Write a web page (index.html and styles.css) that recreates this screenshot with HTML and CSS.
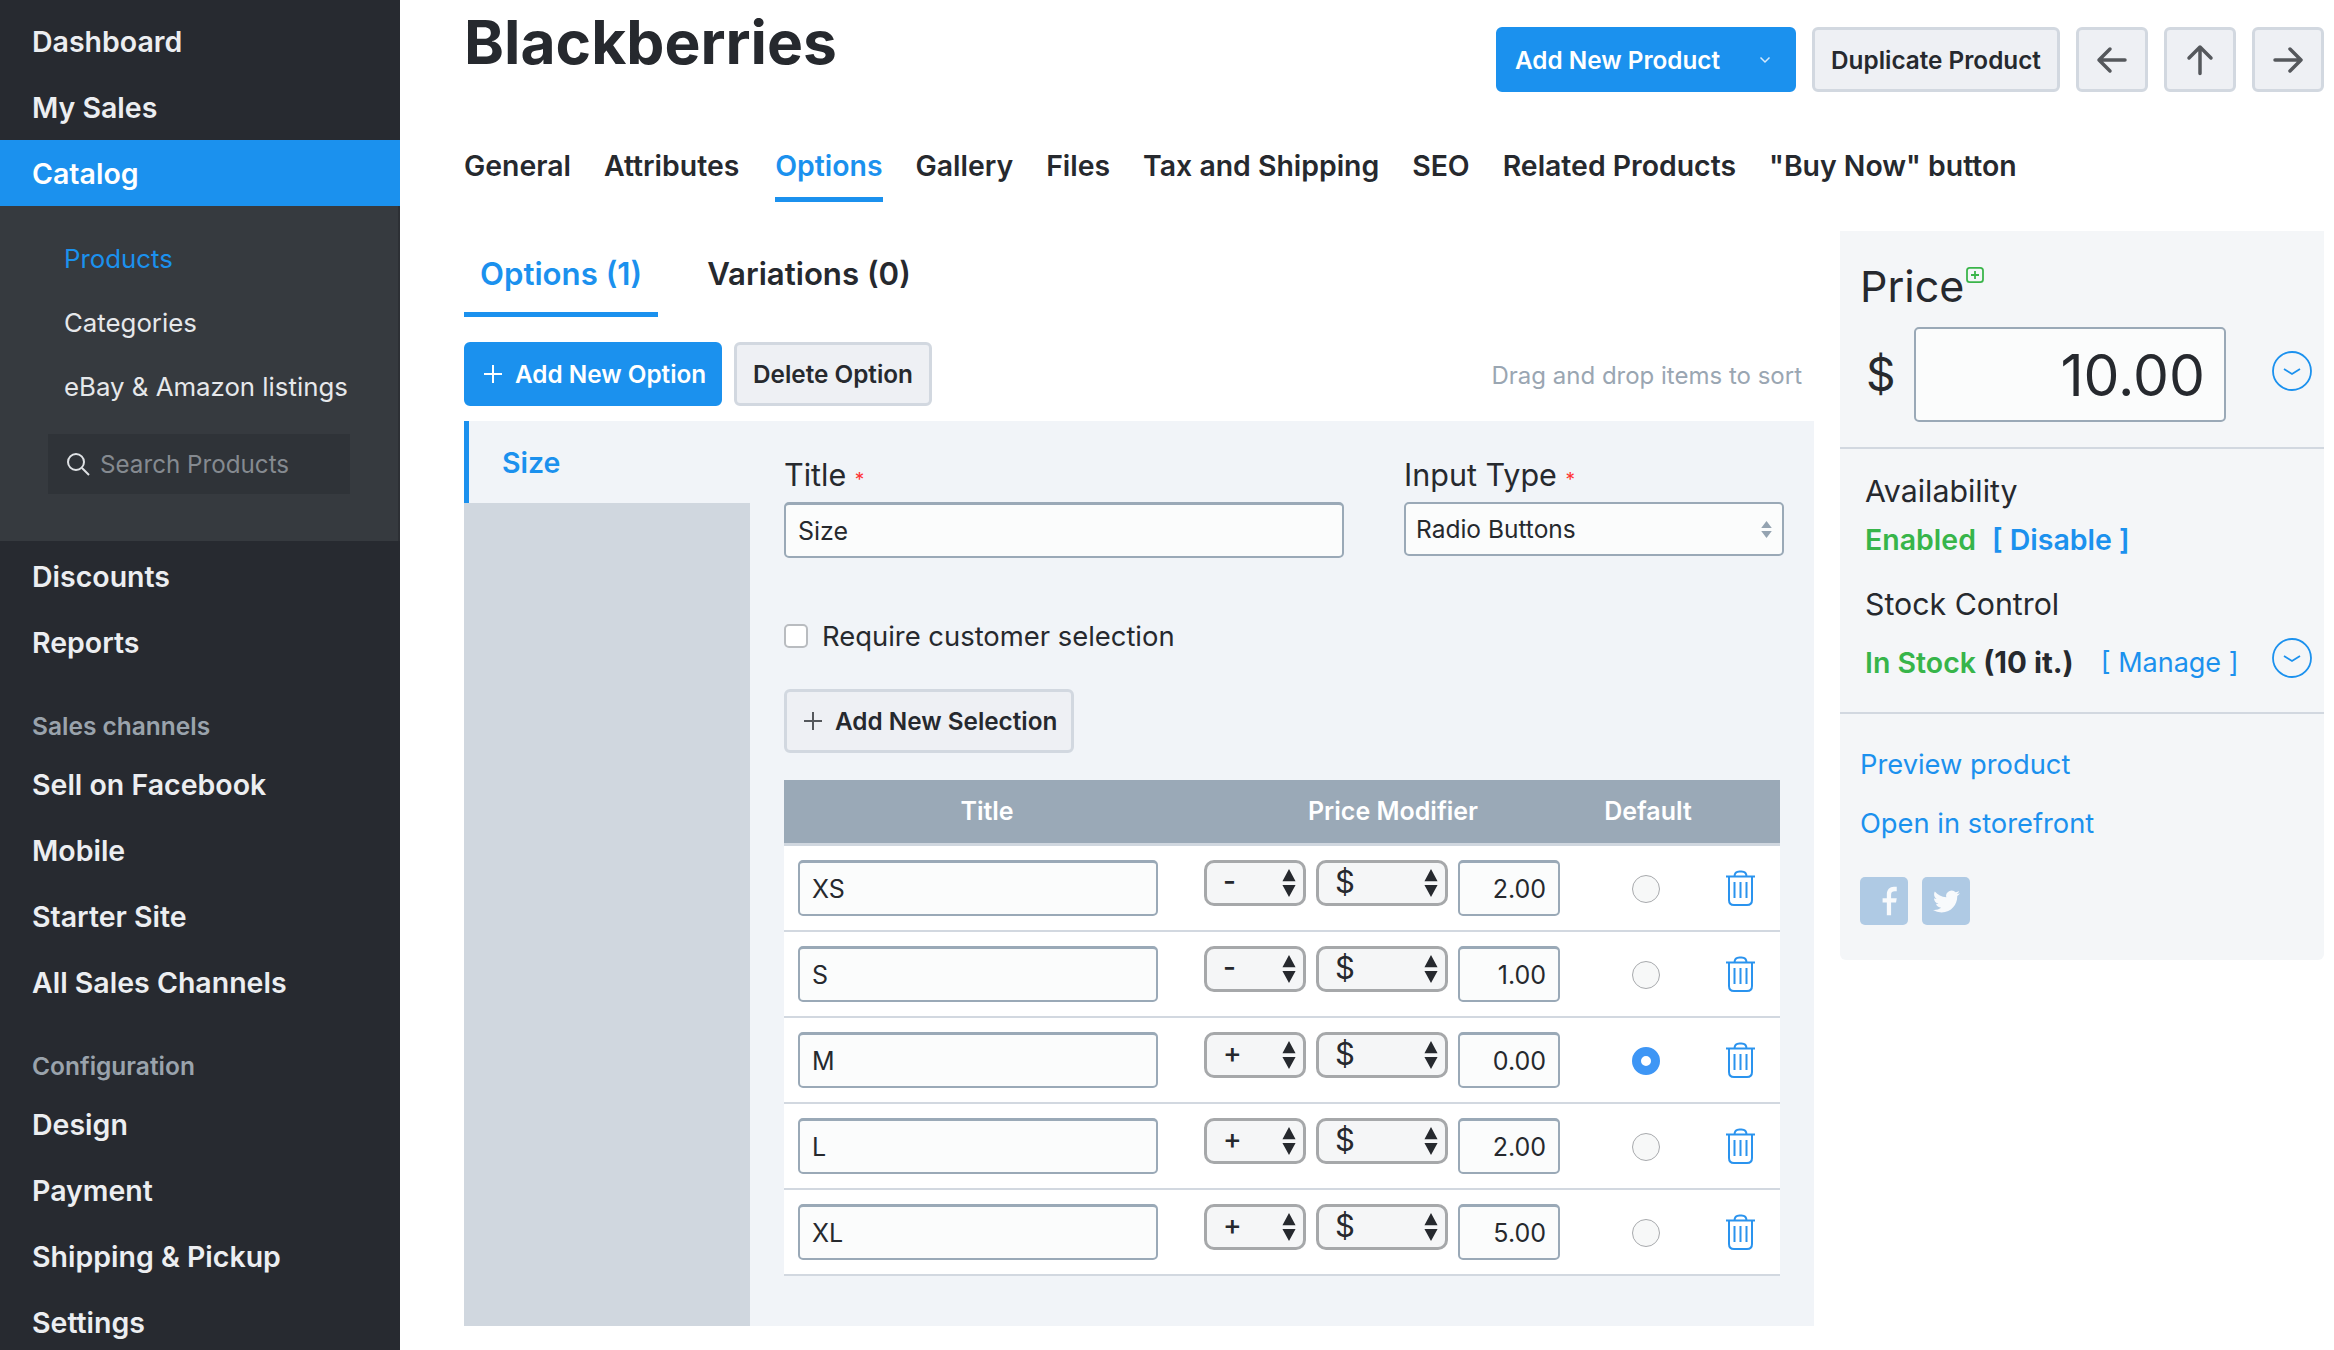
FILE: index.html
```html
<!DOCTYPE html>
<html lang="en">
<head>
<meta charset="utf-8">
<title>Blackberries</title>
<link rel="stylesheet" href="styles.css">
</head>
<body>
<div class="app">
  <nav class="sidebar">
    <a class="nav-item">Dashboard</a>
    <a class="nav-item">My Sales</a>
    <a class="nav-item active">Catalog</a>
    <div class="subnav">
      <a class="sub-item current">Products</a>
      <a class="sub-item">Categories</a>
      <a class="sub-item">eBay &amp; Amazon listings</a>
      <div class="search">
        <svg class="search-icon" viewBox="0 0 24 24"><circle cx="10" cy="10" r="8"/><path d="M16 16l7 7"/></svg>
        <span>Search Products</span>
      </div>
    </div>
    <a class="nav-item">Discounts</a>
    <a class="nav-item">Reports</a>
    <div class="nav-heading">Sales channels</div>
    <a class="nav-item">Sell on Facebook</a>
    <a class="nav-item">Mobile</a>
    <a class="nav-item">Starter Site</a>
    <a class="nav-item">All Sales Channels</a>
    <div class="nav-heading">Configuration</div>
    <a class="nav-item">Design</a>
    <a class="nav-item">Payment</a>
    <a class="nav-item">Shipping &amp; Pickup</a>
    <a class="nav-item">Settings</a>
  </nav>

  <main class="main">
    <header class="page-head">
      <h1 class="page-title">Blackberries</h1>
      <div class="actions">
        <button class="btn btn-primary btn-split">Add New Product
          <svg class="caret" viewBox="0 0 12 8"><path d="M1.5 1.5L6 6l4.5-4.5"/></svg>
        </button>
        <button class="btn btn-dup">Duplicate Product</button>
        <button class="btn btn-icon"><svg viewBox="0 0 32 32"><path d="M29 16H3M14 5L3 16l11 11"/></svg></button>
        <button class="btn btn-icon"><svg viewBox="0 0 32 32"><path d="M16 29.500V3M5 14L16 3l11 11"/></svg></button>
        <button class="btn btn-icon"><svg viewBox="0 0 32 32"><path d="M3 16h26M18 5l11 11-11 11"/></svg></button>
      </div>
    </header>

    <div class="tabs">
      <a class="tab">General</a>
      <a class="tab">Attributes</a>
      <a class="tab active">Options</a>
      <a class="tab">Gallery</a>
      <a class="tab">Files</a>
      <a class="tab">Tax and Shipping</a>
      <a class="tab">SEO</a>
      <a class="tab">Related Products</a>
      <a class="tab">"Buy Now" button</a>
    </div>

    <div class="content">
      <section class="editor">
        <div class="subtabs">
          <a class="subtab active">Options (1)</a>
          <a class="subtab">Variations (0)</a>
        </div>
        <div class="toolbar">
          <button class="btn btn-primary btn-add">
            <svg class="plus" viewBox="0 0 20 20"><path d="M10 1v18M1 10h18"/></svg>Add New Option
          </button>
          <button class="btn btn-delete">Delete Option</button>
          <span class="hint">Drag and drop items to sort</span>
        </div>
        <div class="panel">
          <aside class="option-list">
            <a class="option-item">Size</a>
          </aside>
          <div class="option-form">
            <div class="form-top">
              <div class="form-col-title">
                <label class="label">Title <i class="req">*</i></label>
                <div class="field">Size</div>
              </div>
              <div class="form-col-type">
                <label class="label">Input Type <i class="req">*</i></label>
                <div class="field field-select">Radio Buttons
                  <svg class="updown" viewBox="0 0 12 18"><path d="M6 1l5 6.500H1zM6 17l5-6.500H1z"/></svg>
                </div>
              </div>
            </div>
            <label class="check"><span class="checkbox"></span>Require customer selection</label>
            <button class="btn btn-selection">
              <svg class="plus" viewBox="0 0 20 20"><path d="M10 1v18M1 10h18"/></svg>Add New Selection
            </button>
            <div class="sel-table">
              <div class="sel-head">
                <span>Title</span><span>Price Modifier</span><span>Default</span>
              </div>
              <div class="sel-row">
                <div class="field">XS</div>
                <div class="mods"><div class="mini mini-sign"><span>-</span><svg class="spin" viewBox="0 0 16 32"><path d="M8 1l7 13H1zM8 31l7-13H1z"/></svg></div><div class="mini mini-cur"><span>$</span><svg class="spin" viewBox="0 0 16 32"><path d="M8 1l7 13H1zM8 31l7-13H1z"/></svg></div><div class="field field-num">2.00</div></div>
                <div class="radio-cell"><span class="radio"></span></div>
                <svg class="trash" viewBox="0 0 31 36"><path d="M1 6.500h29M9.500 6.500q0-5 5-5h2q5 0 5 5M4 6.500V30q0 5 5 5h13q5 0 5-5V6.500M9.500 12v16M15.500 12v16M21.500 12v16"/></svg>
              </div>
              <div class="sel-row">
                <div class="field">S</div>
                <div class="mods"><div class="mini mini-sign"><span>-</span><svg class="spin" viewBox="0 0 16 32"><path d="M8 1l7 13H1zM8 31l7-13H1z"/></svg></div><div class="mini mini-cur"><span>$</span><svg class="spin" viewBox="0 0 16 32"><path d="M8 1l7 13H1zM8 31l7-13H1z"/></svg></div><div class="field field-num">1.00</div></div>
                <div class="radio-cell"><span class="radio"></span></div>
                <svg class="trash" viewBox="0 0 31 36"><path d="M1 6.500h29M9.500 6.500q0-5 5-5h2q5 0 5 5M4 6.500V30q0 5 5 5h13q5 0 5-5V6.500M9.500 12v16M15.500 12v16M21.500 12v16"/></svg>
              </div>
              <div class="sel-row">
                <div class="field">M</div>
                <div class="mods"><div class="mini mini-sign"><span>+</span><svg class="spin" viewBox="0 0 16 32"><path d="M8 1l7 13H1zM8 31l7-13H1z"/></svg></div><div class="mini mini-cur"><span>$</span><svg class="spin" viewBox="0 0 16 32"><path d="M8 1l7 13H1zM8 31l7-13H1z"/></svg></div><div class="field field-num">0.00</div></div>
                <div class="radio-cell"><span class="radio radio-on"></span></div>
                <svg class="trash" viewBox="0 0 31 36"><path d="M1 6.500h29M9.500 6.500q0-5 5-5h2q5 0 5 5M4 6.500V30q0 5 5 5h13q5 0 5-5V6.500M9.500 12v16M15.500 12v16M21.500 12v16"/></svg>
              </div>
              <div class="sel-row">
                <div class="field">L</div>
                <div class="mods"><div class="mini mini-sign"><span>+</span><svg class="spin" viewBox="0 0 16 32"><path d="M8 1l7 13H1zM8 31l7-13H1z"/></svg></div><div class="mini mini-cur"><span>$</span><svg class="spin" viewBox="0 0 16 32"><path d="M8 1l7 13H1zM8 31l7-13H1z"/></svg></div><div class="field field-num">2.00</div></div>
                <div class="radio-cell"><span class="radio"></span></div>
                <svg class="trash" viewBox="0 0 31 36"><path d="M1 6.500h29M9.500 6.500q0-5 5-5h2q5 0 5 5M4 6.500V30q0 5 5 5h13q5 0 5-5V6.500M9.500 12v16M15.500 12v16M21.500 12v16"/></svg>
              </div>
              <div class="sel-row">
                <div class="field">XL</div>
                <div class="mods"><div class="mini mini-sign"><span>+</span><svg class="spin" viewBox="0 0 16 32"><path d="M8 1l7 13H1zM8 31l7-13H1z"/></svg></div><div class="mini mini-cur"><span>$</span><svg class="spin" viewBox="0 0 16 32"><path d="M8 1l7 13H1zM8 31l7-13H1z"/></svg></div><div class="field field-num">5.00</div></div>
                <div class="radio-cell"><span class="radio"></span></div>
                <svg class="trash" viewBox="0 0 31 36"><path d="M1 6.500h29M9.500 6.500q0-5 5-5h2q5 0 5 5M4 6.500V30q0 5 5 5h13q5 0 5-5V6.500M9.500 12v16M15.500 12v16M21.500 12v16"/></svg>
              </div>
            </div>
          </div>
        </div>
      </section>

      <aside class="summary">
        <div class="sum-price">
          <div class="price-title">Price<svg class="price-plus" viewBox="0 0 20 18"><rect x="1" y="1" width="18" height="16" rx="3"/><path d="M10 4.500v9M5.500 9h9"/></svg></div>
          <div class="price-row">
            <span class="currency">$</span>
            <div class="price-input">10.00</div>
            <svg class="chevron" viewBox="0 0 40 40"><circle cx="20" cy="20" r="19"/><path d="M12 18l8 5 8-5"/></svg>
          </div>
        </div>
        <div class="sum-status">
          <div class="sum-label">Availability</div>
          <div class="sum-line sum-enabled"><b class="ok">Enabled</b><a class="link-bold">[ Disable ]</a></div>
          <div class="sum-label sum-stock">Stock Control</div>
          <div class="sum-line sum-instock">
            <span class="stock-text"><b class="ok">In Stock</b> <b class="stock-count">(10 it.)</b></span>
            <a class="link">[ Manage ]</a>
            <svg class="chevron" viewBox="0 0 40 40"><circle cx="20" cy="20" r="19"/><path d="M12 18l8 5 8-5"/></svg>
          </div>
        </div>
        <div class="sum-links">
          <a class="link">Preview product</a>
          <a class="link">Open in storefront</a>
          <div class="social">
            <span class="social-btn"><svg class="fb-icon" viewBox="0 0 24 24"><path d="M14 22v-9h-3v-3h3V7.500C14 4 16 2 19 2h2v3.200h-1.500c-1.500 0-2.500.8-2.500 2.300V10h4l-.5 3H17v9z"/></svg></span>
            <span class="social-btn"><svg class="tw-icon" viewBox="0 0 24 24"><path d="M23.953 4.570a10 10 0 01-2.825.775 4.958 4.958 0 002.163-2.723c-.951.555-2.005.959-3.127 1.184a4.920 4.920 0 00-8.384 4.482C7.690 8.095 4.067 6.130 1.640 3.162a4.822 4.822 0 00-.666 2.475c0 1.710.870 3.213 2.188 4.096a4.904 4.904 0 01-2.228-.616v.060a4.923 4.923 0 003.946 4.827 4.996 4.996 0 01-2.212.085 4.936 4.936 0 004.604 3.417 9.867 9.867 0 01-6.102 2.105c-.390 0-.779-.023-1.170-.067a13.995 13.995 0 007.557 2.209c9.053 0 13.998-7.496 13.998-13.985 0-.210 0-.420-.015-.630A9.935 9.935 0 0024 4.590z"/></svg></span>
          </div>
        </div>
      </aside>
    </div>
  </main>
</div>
</body>
</html>
```

FILE: styles.css
```css
* { box-sizing: border-box; }
html, body { margin: 0; height: 100%; overflow: hidden; }
body { font-family: Inter, "Liberation Sans", sans-serif; color: #26292e; background: #fff; }
a { display: block; }
button { font-family: inherit; }

.app { display: flex; height: 1350px; overflow: hidden; }

/* sidebar */
.sidebar { flex: 0 0 400px; background: #272a30; padding-top: 8px; color: #eceef1; }
.nav-item { height: 66px; line-height: 67px; padding-left: 32px; font-size: 28.500px; font-weight: 600; }
.nav-item.active { background: #1b91ee; color: #fff; }
.subnav { height: 335px; background: #363a3f; border-right: 2px solid #2d3035; padding-top: 20px; margin-bottom: 2px; }
.sub-item { height: 64px; line-height: 65px; padding-left: 64px; font-size: 25.800px; font-weight: 400; color: #e6e8eb; }
.sub-item.current { color: #1b91ee; }
.search { display: flex; align-items: center; gap: 10px; margin: 16px 0 0 48px; width: 302px; height: 60px; background: #2f3338; padding-left: 18px; font-size: 24.200px; color: #858a90; }
.search-icon { width: 24px; height: 24px; fill: none; stroke: #dfe2e5; stroke-width: 2; }
.nav-heading { height: 76px; padding: 33px 0 0 32px; font-size: 24.500px; font-weight: 600; line-height: 36px; color: #9aa3ac; }

/* main */
.main { flex: 1; padding: 0 10px 0 64px; min-width: 0; }
.page-head { display: flex; justify-content: space-between; align-items: flex-start; height: 132px; }
.page-title { margin: 0; font-size: 60.500px; line-height: 84px; font-weight: 700; color: #26292e; }
.actions { display: flex; gap: 16px; padding-top: 27px; }
.btn { height: 65px; border: 3px solid #d2d8e0; border-radius: 6px; background: #eef0f4; color: #26292e; font-size: 24.300px; font-weight: 600; padding: 0 16px; display: flex; align-items: center; white-space: nowrap; }
.btn-primary { background: #1b91ee; border-color: #1b91ee; color: #fff; }
.btn-split { width: 300px; padding-left: 16px; justify-content: space-between; padding-right: 22px; }
.btn-dup { width: 248px; justify-content: center; padding: 0; }
.caret { width: 12px; height: 8px; fill: none; stroke: #d5e9fb; stroke-width: 1.500; }
.btn-icon { width: 72px; padding: 0; justify-content: center; }
.btn-icon svg { width: 32px; height: 32px; fill: none; stroke: #55585c; stroke-width: 3.500; stroke-linecap: round; stroke-linejoin: round; }

.tabs { display: flex; gap: 33px; height: 71px; }
.tab { height: 70px; line-height: 68px; font-size: 28.400px; font-weight: 600; white-space: nowrap; }
.tab.active { color: #1b91ee; border-bottom: 5px solid #1b91ee; margin-left: 3px; }

.content { display: flex; gap: 26px; align-items: flex-start; margin-top: 28px; }
.editor { flex: 0 0 1350px; }
.summary { flex: 0 0 484px; background: #f4f6f8; height: 729px; border-radius: 0 0 6px 6px; }

.subtabs { display: flex; gap: 49px; height: 86px; }
.subtab { height: 86px; padding: 6px 16px 0; line-height: 75px; font-size: 31.200px; font-weight: 600; }
.subtab.active { color: #1b91ee; border-bottom: 5px solid #1b91ee; }
.subtab + .subtab { padding-left: 0; }

.toolbar { display: flex; align-items: center; gap: 12px; margin-top: 25px; height: 64px; }
.btn-add { width: 258px; padding-left: 16px; gap: 12px; height: 64px; }
.btn-delete { width: 198px; height: 64px; justify-content: center; padding: 0; }
.plus { width: 20px; height: 20px; fill: none; stroke: currentColor; stroke-width: 2; flex: none; }
.hint { margin-left: auto; padding: 2px 12px 0 0; font-size: 24px; color: #9aa6b2; }

.panel { display: flex; height: 905px; margin-top: 15px; background: #f1f4f8; }
.option-list { flex: 0 0 286px; background: #d0d7df; }
.option-item { height: 82px; line-height: 84px; padding-left: 33px; background: #f1f4f8; border-left: 5px solid #1b91ee; color: #1b91ee; font-size: 28.500px; font-weight: 600; }
.option-form { flex: 1; padding: 32px 0 0 34px; }

.form-top { display: flex; gap: 60px; }
.form-col-title { width: 560px; }
.form-col-type { width: 380px; }
.label { display: block; font-size: 30.500px; line-height: 44px; height: 49px; color: #26292e; }
.req { font-style: normal; color: #f33; font-size: 19px; }
.field { height: 56px; border: 2px solid #9aa9b7; border-top-width: 3px; border-radius: 5px; background: #fbfcfc; padding: 0 12px; display: flex; align-items: center; font-size: 25px; }
.field-select { justify-content: space-between; height: 54px; padding-left: 10px; border-top-width: 2px; font-size: 24.500px; }
.updown { width: 13px; height: 19px; fill: #94a3b1; margin-right: -3px; }

.check { display: flex; align-items: center; gap: 14px; margin-top: 60px; font-size: 27.400px; height: 36px; }
.checkbox { width: 24px; height: 24px; border: 2px solid #b9bcc0; border-radius: 5px; background: #fff; }
.btn-selection { margin-top: 35px; width: 290px; height: 64px; padding-left: 16px; gap: 12px; color: #26292e; }
.btn-selection .plus { color: #55585c; }

.sel-table { margin-top: 27px; width: 996px; }
.sel-head { display: grid; grid-template-columns: 406px 406px 104px; height: 66px; line-height: 63px; background: #9aa9b7; border-bottom: 3px solid #d0d7df; color: #fff; font-size: 25px; font-weight: 600; text-align: center; }
.sel-row { display: grid; grid-template-columns: 406px 356px 165px 31px; align-items: start; height: 86px; padding: 14px 0 0 14px; background: #fff; border-bottom: 2px solid #d2d8e0; }
.sel-row .field { width: 360px; }
.mods { display: flex; gap: 10px; }
.mods .field-num { width: 102px; justify-content: flex-end; padding-right: 12px; font-size: 25px; }
.mini { height: 46px; border: 3px solid #a6a8aa; border-radius: 10px; background: #f5f6f7; display: flex; align-items: center; justify-content: space-between; padding: 0 6px 0 16px; font-size: 28px; font-weight: 500; }
.mini span { position: relative; top: -2px; }
.mini-sign { width: 102px; }
.mini-cur { width: 132px; padding-left: 16px; font-size: 31px; font-weight: 400; }
.spin { width: 16px; height: 30px; fill: #26292e; }
.radio-cell { display: flex; padding: 15px 0 0 72px; }
.radio { width: 28px; height: 28px; border-radius: 50%; border: 1.500px solid #a8aaad; background: #f7f8f8; }
.radio-on { background: #fff; border: 9px solid #3e96f5; }
.trash { width: 31px; height: 36px; margin-top: 10px; fill: none; stroke: #2a93ee; stroke-width: 2; }

/* summary */
.sum-price { height: 218px; padding: 27px 0 0 20px; border-bottom: 2px solid #d2d8e0; }
.price-title { display: flex; align-items: flex-start; font-size: 43px; line-height: 56px; }
.price-plus { width: 18px; height: 16px; margin-top: 9px; margin-left: 2px; fill: none; stroke: #3ab54a; stroke-width: 2; }
.price-row { display: flex; align-items: flex-start; margin-top: 13px; }
.currency { width: 54px; padding-left: 6px; font-size: 46px; line-height: 94px; }
.price-input { width: 312px; height: 95px; padding: 2px 19px 0 0; border: 2px solid #9aa9b7; border-radius: 5px; background: #fbfcfc; display: flex; align-items: center; justify-content: flex-end; font-size: 57px; }
.chevron { width: 40px; height: 40px; margin: 24px 0 0 46px; fill: none; stroke: #1b91ee; stroke-width: 1.800; }

.sum-status { height: 265px; padding: 20px 0 0 25px; border-bottom: 2px solid #d2d8e0; position: relative; }
.sum-label { font-size: 30.300px; line-height: 44px; }
.sum-line { display: flex; align-items: center; font-size: 28.500px; font-weight: 600; }
.sum-enabled { gap: 16px; line-height: 40px; margin-top: 7px; }
.sum-stock { margin-top: 22px; }
.sum-instock { margin-top: 16px; line-height: 40px; position: relative; }
.sum-instock .link { margin-left: 27px; font-size: 27px; font-weight: 400; }
.sum-instock .chevron { position: absolute; left: 407px; top: -4px; margin: 0; }
.stock-count { font-weight: 700; font-size: 29.500px; }
.ok { color: #37b54a; font-weight: 600; }
.link { color: #1b91ee; }
.link-bold { color: #1b91ee; font-weight: 600; }

.sum-links { padding: 28px 0 0 20px; font-size: 27.300px; }
.sum-links > .link { height: 59px; line-height: 46px; }
.social { display: flex; gap: 14px; margin-top: 17px; }
.social-btn { width: 48px; height: 48px; border-radius: 5px; background: #afcae4; display: flex; align-items: center; justify-content: center; }
.social-btn svg { fill: #f8fafc; }
.fb-icon { width: 34px; height: 34px; }
.tw-icon { width: 27px; height: 27px; }
```
